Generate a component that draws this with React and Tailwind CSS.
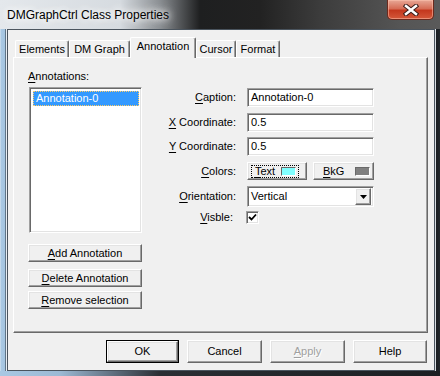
import React from 'react'

// classic win32 borders
const raised = 'border border-t-white border-l-white border-r-[#696969] border-b-[#696969] shadow-[inset_-1px_-1px_0_#a0a0a0,inset_1px_1px_0_#e3e3e3] bg-[#f0f0f0]'
const sunken = 'border border-t-[#a0a0a0] border-l-[#a0a0a0] border-r-white border-b-white shadow-[inset_1px_1px_0_#696969,inset_-1px_-1px_0_#e3e3e3] bg-white'

const U = ({ children }) => <span className="underline underline-offset-[2px]">{children}</span>

function Tab({ label, active, w }) {
  if (active) {
    return (
      <div
        className={`relative z-10 -mb-px h-[21px] ${w} border-l border-t border-r border-l-white border-t-white border-r-[#696969] bg-[#f0f0f0] rounded-t-[2px] flex justify-center pt-[2px] shadow-[inset_-1px_0_0_#a0a0a0]`}
      >
        {label}
      </div>
    )
  }
  return (
    <div
      className={`h-[17px] ${w} border-l border-t border-r border-l-white border-t-white border-r-[#696969] bg-[#f0f0f0] rounded-t-[2px] flex justify-center pt-[2px] shadow-[inset_-1px_0_0_#a0a0a0]`}
    >
      {label}
    </div>
  )
}

function Btn({ children, className = '' }) {
  return (
    <div className={`${raised} flex items-center justify-center ${className}`}>{children}</div>
  )
}

function Row({ label, children, h }) {
  return (
    <div className={`flex items-center ${h}`}>
      <div className="w-[94px] text-right">{label}</div>
      <div className="ml-[11px] w-[127px] flex">{children}</div>
    </div>
  )
}

export default function App() {
  return (
    <div
      className="w-[440px] h-[376px] overflow-hidden flex flex-col bg-[#2b2f33] text-[11px] leading-[13px] text-black"
      style={{ fontFamily: '"Liberation Sans", Arial, sans-serif' }}
    >
      {/* title bar */}
      <div className="relative h-[29px] shrink-0 bg-[linear-gradient(90deg,#e4e8ec_0px,#d6dbe0_120px,#8a8e92_160px,#1e1f20_200px,#222_260px,#3c3c3c_320px,#555_400px,#5a5a5a_440px)]">
        <div className="absolute left-[7px] top-[7px] text-[12px] leading-[16px] text-black [text-shadow:0_0_6px_#fff,0_0_10px_#fff,0_0_14px_#fff]">
          DMGraphCtrl Class Properties
        </div>
        <div className="absolute right-[6px] top-0 w-[47px] h-[20px] rounded-b-[5px] border border-t-0 border-[#6b2a1e] bg-[linear-gradient(180deg,#e8a896_0%,#d66d56_45%,#c4381e_55%,#d4583a_100%)] shadow-[inset_0_0_0_1px_rgba(255,200,180,0.5)] flex items-center justify-center">
          <svg width="16" height="12" viewBox="0 0 16 12">
            <path d="M3 2 L13 10 M13 2 L3 10" stroke="#3a1c18" strokeWidth="4.5" strokeLinecap="square" />
            <path d="M3 2 L13 10 M13 2 L3 10" stroke="#ffffff" strokeWidth="2.5" strokeLinecap="square" />
          </svg>
        </div>
      </div>

      <div className="flex flex-1">
        {/* left frame */}
        <div className="w-[7px] bg-[linear-gradient(90deg,#dde8f2_0px,#a9c8e3_1px,#a4c4e0_5px,#5f7487_5px,#5f7487_6px,#e8eef4_6px)]" />

        {/* client */}
        <div className="w-[428px] h-[342px] border border-[#4a545e] bg-[#f0f0f0] pl-[5px] pr-[6px] flex flex-col">
          {/* tabs */}
          <div className="mt-[7px] h-[20px] flex items-end pl-[2px]">
            <Tab label="Elements" w="w-[54px]" />
            <Tab label="DM Graph" w="w-[61px]" />
            <Tab label="Annotation" w="w-[66px]" active />
            <Tab label="Cursor" w="w-[40px]" />
            <Tab label="Format" w="w-[44px]" />
          </div>

          {/* panel */}
          <div className="h-[276px] border border-t-white border-l-white border-r-[#696969] border-b-[#696969] shadow-[inset_-1px_-1px_0_#a0a0a0] flex">
            <div className="pl-[14px] w-[128px] flex flex-col">
              <div className="mt-[12px]">
                <U>A</U>nnotations:
              </div>
              <div className={`${sunken} mt-[4px] ml-[1px] w-[113px] h-[146px] p-[2px]`}>
                <div className="ml-[1px] mt-[1px] h-[15px] bg-[#3399ff] text-white pl-[2px] flex items-center border border-dotted border-[#ffcc66]">
                  Annotation-0
                </div>
              </div>
              <Btn className="mt-[11px] w-[114px] h-[18px]">
                <U>A</U>dd Annotation
              </Btn>
              <Btn className="mt-[7px] w-[114px] h-[18px]">
                <U>D</U>elete Annotation
              </Btn>
              <Btn className="mt-[4px] w-[114px] h-[18px]">
                <U>R</U>emove selection
              </Btn>
            </div>

            <div className="mt-[30px] flex flex-col">
              <Row label={<><U>C</U>aption:</>} h="h-[19px]">
                <div className={`${sunken} w-full h-[19px] pl-[3px] flex items-center`}>Annotation-0</div>
              </Row>
              <div className="h-[6px]" />
              <Row label={<><U>X</U> Coordinate:</>} h="h-[19px]">
                <div className={`${sunken} w-full h-[19px] pl-[3px] flex items-center`}>0.5</div>
              </Row>
              <div className="h-[5px]" />
              <Row label={<><U>Y</U> Coordinate:</>} h="h-[19px]">
                <div className={`${sunken} w-full h-[19px] pl-[3px] flex items-center`}>0.5</div>
              </Row>
              <div className="h-[6px]" />
              <Row label={<><U>C</U>olors:</>} h="h-[18px]">
                <div className={`${raised} w-[60px] h-[18px] flex items-center pl-[3px]`}>
                  <div className="h-[13px] pl-[3px] pr-[2px] flex items-center gap-[6px] border border-dotted border-black">
                    <span>
                      <U>T</U>ext
                    </span>
                    <div className="w-[15px] h-[9px] bg-[#80ffff] border border-t-[#696969] border-l-[#696969] border-r-white border-b-white" />
                  </div>
                </div>
                <div className={`${raised} ml-[6px] w-[61px] h-[18px] flex items-center pl-[9px]`}>
                  <span>
                    <U>B</U>kG
                  </span>
                  <div className="ml-[11px] w-[15px] h-[9px] bg-[#808080] border border-t-[#696969] border-l-[#696969] border-r-white border-b-white" />
                </div>
              </Row>
              <div className="h-[6px]" />
              <Row label={<><U>O</U>rientation:</>} h="h-[21px]">
                <div className={`${sunken} w-full h-[21px] pl-[3px] pr-[2px] flex items-center justify-between`}>
                  <span>Vertical</span>
                  <div className={`${raised} w-[16px] h-[17px] flex items-center justify-center`}>
                    <svg width="7" height="4" viewBox="0 0 7 4">
                      <path d="M0 0 H7 L3.5 4 Z" fill="#000" />
                    </svg>
                  </div>
                </div>
              </Row>
              <div className="h-[4px]" />
              <div className="flex items-center h-[13px]">
                <div className="w-[91px] text-right">
                  <U>V</U>isble:
                </div>
                <div className={`${sunken} ml-[13px] w-[13px] h-[13px] flex items-center justify-center`}>
                  <svg width="9" height="9" viewBox="0 0 9 9">
                    <path d="M1 4 L3.5 6.5 L8 1.5" stroke="#000" strokeWidth="1.8" fill="none" />
                  </svg>
                </div>
              </div>
            </div>
          </div>

          {/* dialog buttons */}
          <div className="mt-[7px] flex justify-end gap-[8px] pr-[1px]">
            <div className={`w-[73px] h-[23px] border border-black flex`}>
              <div className={`${raised} flex-1 flex items-center justify-center`}>OK</div>
            </div>
            <Btn className="w-[75px] h-[23px]">Cancel</Btn>
            <Btn className="w-[75px] h-[23px] text-[#a0a0a0] [text-shadow:1px_1px_0_#fff]">
              <U>A</U>pply
            </Btn>
            <Btn className="w-[74px] h-[23px]">Help</Btn>
          </div>
        </div>

        {/* right frame */}
        <div className="w-[5px] bg-[linear-gradient(90deg,#d8dde2_0px,#d8dde2_1px,#1a1d21_1px,#22272c_5px)]" />
      </div>

      {/* bottom frame */}
      <div className="h-[5px] shrink-0 bg-[linear-gradient(90deg,#a9c8e3_0px,#9cb9d4_60px,#2a2e33_160px,#1c1f22_440px)]" />
    </div>
  )
}
